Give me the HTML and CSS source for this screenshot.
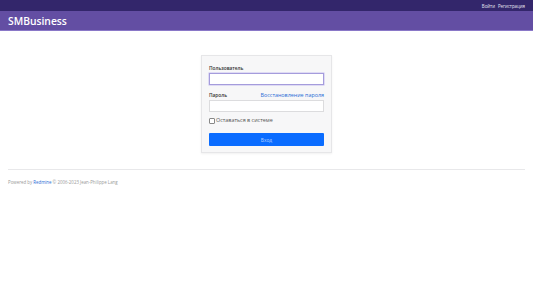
FILE: index.html
```html
<!DOCTYPE html>
<html lang="ru">
<head>
  <meta charset="UTF-8" />
  <title>SMBusiness</title>
  <link rel="stylesheet" href="styles.css">
</head>
<body>
  <div class="top-menu">
    <a href="#">Войти</a>
    <a href="#">Регистрация</a>
  </div>
  <div class="header">
    <h1>SMBusiness</h1>
  </div>

  <div class="content">
    <div class="login-box">
      <label class="field-label">Пользователь</label>
      <input class="field focused" type="text">
      <div class="label-row">
        <label class="field-label">Пароль</label>
        <a href="#" class="lost">Восстановление пароля</a>
      </div>
      <input class="field" type="password">
      <label class="autologin"><span class="check"></span> Оставаться в системе</label>
      <button class="submit">Вход</button>
    </div>
  </div>

  <div class="footer">
    Powered by <a href="#">Redmine</a> © 2006-2023 Jean-Philippe Lang
  </div>
</body>
</html>
```

FILE: styles.css
```css
body {
  margin: 0;
  font-family: "Open Sans", "Noto Sans", sans-serif;
  background: white;
  color: #333;
}

.top-menu {
  background: #33266b;
  height: 11px;
  display: flex;
  justify-content: flex-end;
  align-items: center;
  gap: 3px;
  padding: 0 8px;
  font-size: 4.4px;
}

.top-menu a {
  color: #e8e6f4;
  text-decoration: none;
}

.header {
  background: #634ea3;
  height: 19px;
  border-bottom: 1px solid #8a78c8;
  padding: 0 8px;
  display: flex;
  align-items: center;
}

.header h1 {
  margin: 0;
  color: white;
  font-size: 10.3px;
  font-weight: 600;
}

.content {
  display: flex;
  justify-content: center;
  padding: 24px 0 16px 0;
}

.login-box {
  width: 115px;
  background: #f7f7f8;
  border: 1px solid #e6e6e8;
  box-shadow: 0 1px 2px rgba(0,0,0,0.06);
  padding: 7px 7px 6px 7px;
  display: flex;
  flex-direction: column;
  font-size: 4.8px;
}

.field-label {
  font-weight: 600;
  color: #333;
  line-height: 10px;
}

.label-row {
  display: flex;
  justify-content: space-between;
  align-items: center;
  margin-top: 5px;
}

.lost {
  color: #2a6cd6;
  text-decoration: none;
  font-size: 5.4px;
}

.field {
  box-sizing: border-box;
  width: 100%;
  height: 12px;
  margin: 0;
  border: 1px solid #dcdcde;
  background: white;
  padding: 0;
}

.field.focused {
  border-color: #a59cdc;
  box-shadow: 0 0 0 0.5px #c8c0ef;
}

.autologin {
  display: flex;
  align-items: center;
  gap: 1px;
  margin-top: 5px;
  color: #555;
  font-size: 5.4px;
  line-height: 7px;
}

.check {
  width: 4px;
  height: 4px;
  border: 0.5px solid #888;
  border-radius: 1px;
  background: white;
}

.submit {
  margin-top: 9px;
  height: 13px;
  border: none;
  border-radius: 1px;
  background: #0a6cff;
  color: #b8d2ff;
  font-family: inherit;
  font-size: 4.8px;
  padding: 0;
}

.footer {
  margin: 0 8px;
  border-top: 1px solid #e8e8ea;
  padding-top: 9px;
  font-size: 4.4px;
  color: #999;
}

.footer a {
  color: #2a6cd6;
  text-decoration: none;
}
```
